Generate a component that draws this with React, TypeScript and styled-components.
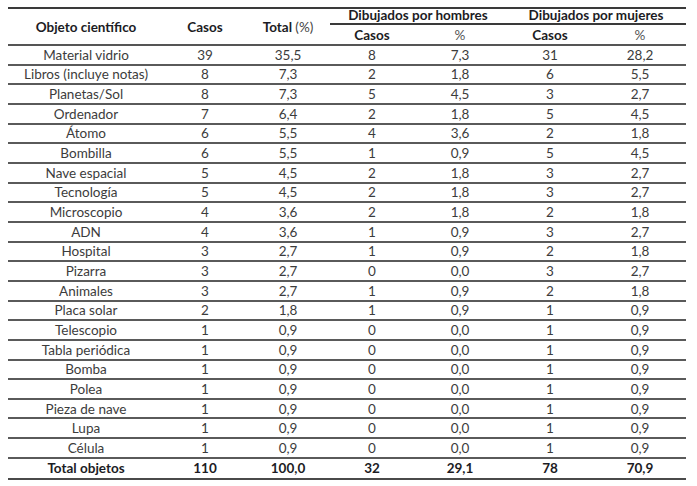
import styled, { createGlobalStyle } from 'styled-components';

const GlobalStyle = createGlobalStyle`
  html, body {
    margin: 0;
    padding: 0;
    background: #ffffff;
  }
  body {
    font-family: Lato, "Open Sans", "Liberation Sans", sans-serif;
  }
`;

const COLUMNS = '156px 82px 84px 84px 92px 88px 92px';

const ROWS: [string, string, string, string, string, string, string][] = [
  ['Material vidrio', '39', '35,5', '8', '7,3', '31', '28,2'],
  ['Libros (incluye notas)', '8', '7,3', '2', '1,8', '6', '5,5'],
  ['Planetas/Sol', '8', '7,3', '5', '4,5', '3', '2,7'],
  ['Ordenador', '7', '6,4', '2', '1,8', '5', '4,5'],
  ['Átomo', '6', '5,5', '4', '3,6', '2', '1,8'],
  ['Bombilla', '6', '5,5', '1', '0,9', '5', '4,5'],
  ['Nave espacial', '5', '4,5', '2', '1,8', '3', '2,7'],
  ['Tecnología', '5', '4,5', '2', '1,8', '3', '2,7'],
  ['Microscopio', '4', '3,6', '2', '1,8', '2', '1,8'],
  ['ADN', '4', '3,6', '1', '0,9', '3', '2,7'],
  ['Hospital', '3', '2,7', '1', '0,9', '2', '1,8'],
  ['Pizarra', '3', '2,7', '0', '0,0', '3', '2,7'],
  ['Animales', '3', '2,7', '1', '0,9', '2', '1,8'],
  ['Placa solar', '2', '1,8', '1', '0,9', '1', '0,9'],
  ['Telescopio', '1', '0,9', '0', '0,0', '1', '0,9'],
  ['Tabla periódica', '1', '0,9', '0', '0,0', '1', '0,9'],
  ['Bomba', '1', '0,9', '0', '0,0', '1', '0,9'],
  ['Polea', '1', '0,9', '0', '0,0', '1', '0,9'],
  ['Pieza de nave', '1', '0,9', '0', '0,0', '1', '0,9'],
  ['Lupa', '1', '0,9', '0', '0,0', '1', '0,9'],
  ['Célula', '1', '0,9', '0', '0,0', '1', '0,9'],
];

const TOTAL = ['Total objetos', '110', '100,0', '32', '29,1', '78', '70,9'];

const Table = styled.div`
  width: 678px;
  margin: 7px 0 0 8px;
  border-top: 2px solid #3a3a3a;
  border-bottom: 2px solid #4a4a4a;
`;

const Header = styled.div`
  display: grid;
  grid-template-columns: ${COLUMNS};
  grid-template-rows: 16px 19px;
  border-bottom: 2px solid #555;
  color: #1c1c24;
  font-weight: 700;
  font-size: 13.5px;
`;

const SpanCell = styled.div`
  grid-row: 1 / 3;
  display: flex;
  align-items: center;
  justify-content: center;
  white-space: nowrap;
`;

const Light = styled.span`
  font-weight: 400;
  color: #444;
`;

const GroupCell = styled.div<{ $start: number }>`
  grid-row: 1;
  grid-column: ${(p) => p.$start} / span 2;
  display: flex;
  align-items: flex-end;
  justify-content: center;
  border-bottom: 2px solid #3a3a3a;
  line-height: 15px;
  white-space: nowrap;
`;

const SubCell = styled.div<{ $pct?: boolean }>`
  grid-row: 2;
  display: flex;
  align-items: center;
  justify-content: center;
  font-weight: ${(p) => (p.$pct ? 400 : 700)};
  color: ${(p) => (p.$pct ? '#555' : 'inherit')};
  font-size: 13.5px;
`;

const Row = styled.div<{ $total?: boolean }>`
  display: grid;
  grid-template-columns: ${COLUMNS};
  height: ${(p) => (p.$total ? '19px' : '19.67px')};
  box-sizing: border-box;
  border-bottom: ${(p) => (p.$total ? 'none' : '2px solid #5a5a5a')};
  color: ${(p) => (p.$total ? '#1c1c24' : '#3c3c3c')};
  font-weight: ${(p) => (p.$total ? 700 : 400)};
  font-size: 13.5px;
`;

const Cell = styled.div`
  display: flex;
  align-items: center;
  justify-content: center;
  white-space: nowrap;
`;

export default function App() {
  return (
    <>
      <GlobalStyle />
      <Table>
        <Header>
          <SpanCell style={{ gridColumn: 1 }}>Objeto científico</SpanCell>
          <SpanCell style={{ gridColumn: 2 }}>Casos</SpanCell>
          <SpanCell style={{ gridColumn: 3 }}>
            Total&nbsp;<Light>(%)</Light>
          </SpanCell>
          <GroupCell $start={4}>Dibujados por hombres</GroupCell>
          <GroupCell $start={6}>Dibujados por mujeres</GroupCell>
          <SubCell style={{ gridColumn: 4 }}>Casos</SubCell>
          <SubCell style={{ gridColumn: 5 }} $pct>%</SubCell>
          <SubCell style={{ gridColumn: 6 }}>Casos</SubCell>
          <SubCell style={{ gridColumn: 7 }} $pct>%</SubCell>
        </Header>
        {ROWS.map((row) => (
          <Row key={row[0]}>
            {row.map((value, i) => (
              <Cell key={i}>{value}</Cell>
            ))}
          </Row>
        ))}
        <Row $total>
          {TOTAL.map((value, i) => (
            <Cell key={i}>{value}</Cell>
          ))}
        </Row>
      </Table>
    </>
  );
}
